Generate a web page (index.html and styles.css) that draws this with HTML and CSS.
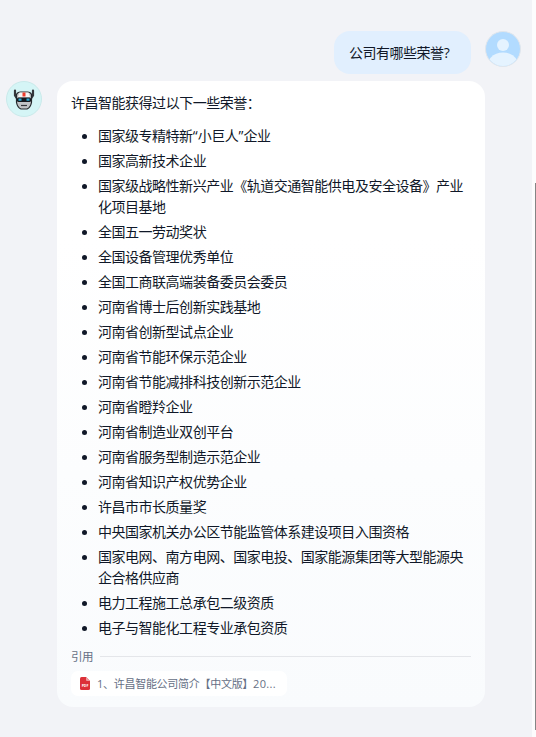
FILE: index.html
```
<!DOCTYPE html>
<html lang="zh-CN">
<head>
  <title>许昌智能</title>
  <meta charset="utf-8">
  <link rel="stylesheet" href="styles.css">
</head>
<body>
  <div id="chat">
    <div class="message user">
      <div class="question">公司有哪些荣誉<span class="mark">?</span></div>
      <svg class="avatar" viewBox="0 0 36 36">
        <defs><clipPath id="round"><circle cx="18" cy="18" r="17"/></clipPath></defs>
        <circle cx="18" cy="18" r="17.5" fill="#b2dbff" stroke="#e1e6ec"/>
        <g clip-path="url(#round)" fill="#e5f3ff">
          <circle cx="18" cy="14" r="6"/>
          <circle cx="18" cy="39" r="17.5"/>
        </g>
      </svg>
    </div>

    <div class="message bot">
      <svg class="avatar" viewBox="0 0 36 36">
        <circle cx="18" cy="18" r="17.5" fill="#d5f5f6" stroke="#c9e9ea"/>
        <!-- ears -->
        <path d="M9 9.500v5l2 3M27 9.500v5l-2 3" fill="none" stroke="#34373b" stroke-width="2.200" stroke-linecap="round"/>
        <!-- head -->
        <path d="M10.500 13.500q1-2.500 4-2.500h7q3 0 4 2.500v8q-1 5-4.500 6.500h-6q-3.500-1.500-4.500-6.500z" fill="#c1c4c6" stroke="#25282c" stroke-width="1.200"/>
        <path d="M13.500 11.600h9l1.500 4.400H12z" fill="#f4f5f5"/>
        <path d="M16.500 11.500h3v4h-3z" fill="#ed3c2d"/>
        <rect x="11" y="16.500" width="14" height="4.500" rx="1.500" fill="#15191e"/>
        <path d="M12.500 18.700h3M20.500 18.700h3" stroke="#2ca9d2" stroke-width="2.200"/>
        <path d="M15 24.500h6" stroke="#34383c" stroke-width="1.200"/>
      </svg>
      <div class="answer">
        <p>许昌智能获得过以下一些荣誉：</p>
        <ul>
          <li>国家级专精特新<span class="mark">“</span>小巨人<span class="mark">”</span>企业</li>
          <li>国家高新技术企业</li>
          <li>国家级战略性新兴产业《轨道交通智能供电及安全设备》产业化项目基地</li>
          <li>全国五一劳动奖状</li>
          <li>全国设备管理优秀单位</li>
          <li>全国工商联高端装备委员会委员</li>
          <li>河南省博士后创新实践基地</li>
          <li>河南省创新型试点企业</li>
          <li>河南省节能环保示范企业</li>
          <li>河南省节能减排科技创新示范企业</li>
          <li>河南省瞪羚企业</li>
          <li>河南省制造业双创平台</li>
          <li>河南省服务型制造示范企业</li>
          <li>河南省知识产权优势企业</li>
          <li>许昌市市长质量奖</li>
          <li>中央国家机关办公区节能监管体系建设项目入围资格</li>
          <li>国家电网、南方电网、国家电投、国家能源集团等大型能源央企合格供应商</li>
          <li>电力工程施工总承包二级资质</li>
          <li>电子与智能化工程专业承包资质</li>
        </ul>
        <div class="cite">引用</div>
        <div class="file">
          <svg class="pdf" viewBox="0 0 10 13">
            <path d="M1.500 0H6l4 4v7.500q0 1.500-1.500 1.500h-7Q0 13 0 11.500v-10Q0 0 1.500 0z" fill="#dc3038"/>
            <path d="M6 0l4 4H7Q6 4 6 3z" fill="#ee9ca0"/>
            <text x="5" y="10" text-anchor="middle">PDF</text>
          </svg>
          <span>1、许昌智能公司简介【中文版】<span class="mark">20...</span></span>
        </div>
      </div>
    </div>
  </div>
  <div class="scrollbar"></div>
</body>
</html>
```

FILE: styles.css
```
body {
  margin: 0;
  height: 737px;
  display: flex;
  overflow: hidden;
  background-color: #fcfcfd;
  color: #101828;
  font-family: "Open Sans", "Noto Sans CJK SC", sans-serif;
  font-size: 14px;
  line-height: 21px;
  letter-spacing: -.48px;
}
#chat {
  width: 532px;
  box-sizing: border-box;
  padding: 31px 11px 0 6px;
  background-color: #f2f3f7;
}
.message {
  display: flex;
  align-items: flex-start;
}
.user {
  justify-content: flex-end;
  gap: 14px;
  height: 50px;
}
.bot {
  gap: 15px;
}
.avatar {
  width: 36px;
  height: 36px;
  flex: none;
}
.question {
  box-sizing: border-box;
  width: 137px;
  height: 43px;
  padding: 11px 15px;
  border-radius: 16px;
  background-color: #e1effe;
  white-space: nowrap;
}
.answer {
  box-sizing: border-box;
  width: 428px;
  height: 626px;
  padding: 11px 14px;
  border-radius: 16px;
  background: linear-gradient(#fff 25%, #f9fbfd);
}
.mark {  /* latin characters are not tightened */
  letter-spacing: .3px;
}
p {
  margin: 0 0 12px;
}
ul {
  margin: 0;
  padding-left: 27px;
}
li {
  margin-bottom: 4px;
}
li::marker {
  font-size: 13px;
}
.cite {
  display: flex;
  align-items: center;
  gap: 7px;
  margin-top: 7px;
  height: 22px;
  font-size: 11.500px;
  color: #667085;
}
.cite::after {  /* line beside the label */
  content: "";
  flex: 1;
  height: 1px;
  background-color: #e4e6ea;
}
.file {
  display: flex;
  align-items: center;
  gap: 7px;
  box-sizing: border-box;
  width: 216px;
  height: 25px;
  margin-top: 4px;
  padding-left: 9px;
  border-radius: 7px;
  background-color: #fff;
  color: #667085;
  font-size: 11px;
  letter-spacing: -.28px;
  white-space: nowrap;
}
.pdf {
  width: 10px;
  height: 13px;
}
.pdf text {
  fill: #fff;
  font-size: 3.500px;
  font-weight: bold;
  letter-spacing: 0;
}
.scrollbar {
  width: 1px;
  height: 547px;
  margin: 183px 0 0 3px;
  background-color: #858585;
}
```
